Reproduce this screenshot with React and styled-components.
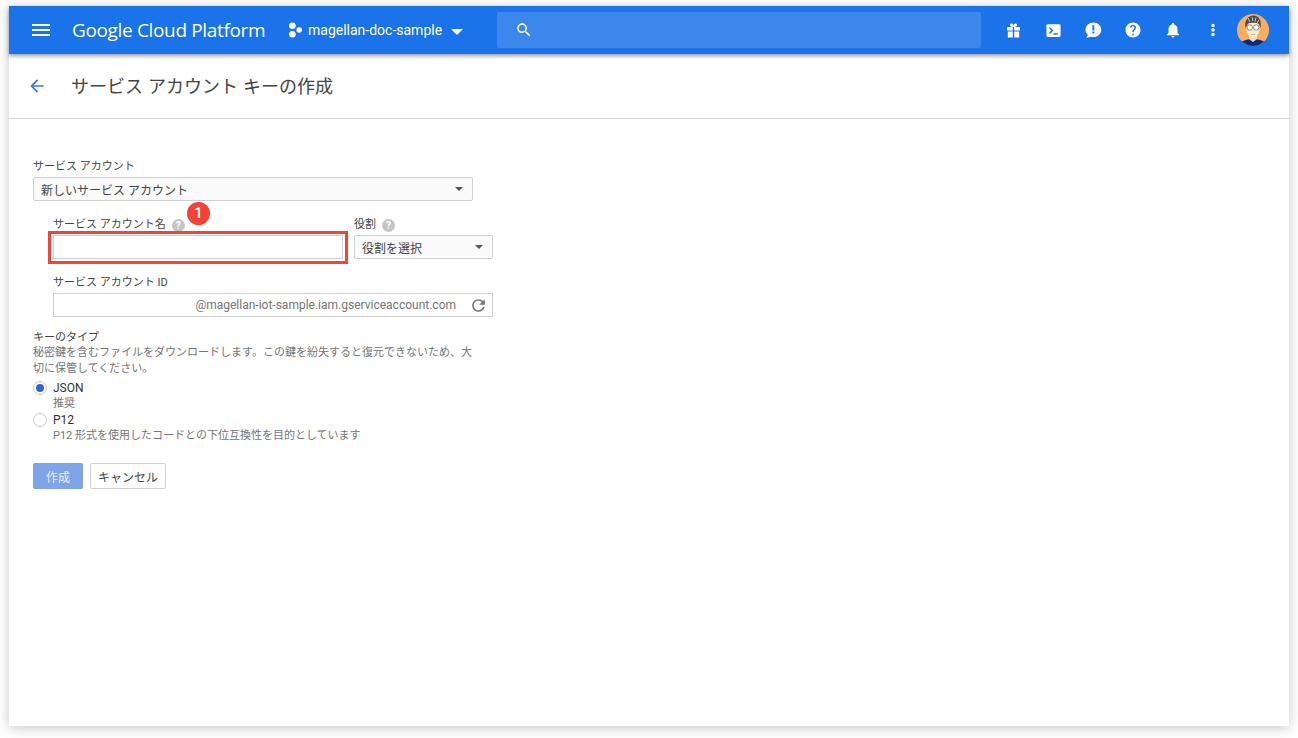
import React from "react";
import styled, { createGlobalStyle } from "styled-components";

const FONT = `Roboto, "Noto Sans CJK JP", sans-serif`;

const Global = createGlobalStyle`
  html, body { margin: 0; padding: 0; background: #fff; }
  body { font-family: ${FONT}; font-size: 12px; color: #333; }
  * { box-sizing: border-box; }
`;

const Page = styled.div`
  padding: 6px 9px 12px;
  height: 738px;
  overflow: hidden;
`;
const Frame = styled.div`
  width: 1280px;
  height: 720px;
  background: #fff;
  box-shadow: 0 2px 12px rgba(0, 0, 0, 0.22);
  display: flex;
  flex-direction: column;
`;
const Header = styled.header`
  height: 48px;
  flex: none;
  background: #1a73e8;
  box-shadow: 0 2px 4px rgba(0, 0, 0, 0.4);
  display: flex;
  align-items: center;
  position: relative;
  color: #fff;
`;
const MenuButton = styled.div`
  width: 24px;
  height: 24px;
  margin-left: 20px;
  display: flex;
`;
const Brand = styled.div`
  margin-left: 19px;
  width: 193px;
  font-family: "Open Sans", Roboto, sans-serif;
  font-size: 19px;
  letter-spacing: -0.35px;
  white-space: nowrap;
`;
const ProjectPicker = styled.div`
  margin-left: 23px;
  width: 209px;
  display: flex;
  align-items: center;
  font-size: 14px;
`;
const ProjectName = styled.span`
  margin-left: 4px;
`;
const Caret = styled.span`
  width: 0;
  height: 0;
  border-left: 6px solid transparent;
  border-right: 6px solid transparent;
  border-top: 6px solid #fff;
  margin-left: 9px;
  margin-top: 3px;
`;
const Search = styled.div`
  width: 484px;
  height: 36px;
  background: #3c87eb;
  display: flex;
  align-items: center;
  padding-left: 18px;
  border-radius: 2px;
`;
const Actions = styled.div`
  margin-left: 12px;
  display: flex;
  align-items: center;
`;
const Action = styled.div`
  width: 40px;
  height: 40px;
  display: flex;
  align-items: center;
  justify-content: center;
`;
const Avatar = styled.div`
  width: 32px;
  height: 32px;
  margin-left: 4px;
  display: flex;
`;
const TitleBar = styled.div`
  height: 65px;
  flex: none;
  border-bottom: 1px solid #d4d4d4;
  display: flex;
  align-items: center;
  padding-left: 18px;
`;
const Title = styled.h1`
  margin: 2px 0 0 24px;
  font-size: 18px;
  font-weight: 400;
  color: #444;
  line-height: 24px;
  word-spacing: 0.5px;
`;
const Form = styled.div`
  padding: 40px 0 0 24px;
  display: flex;
  flex-direction: column;
`;
const Label = styled.label`
  display: flex;
  align-items: center;
  height: 16px;
  font-size: 11px;
  color: #444;
  line-height: 16px;
`;
const Select = styled.div`
  width: ${(p) => p.$width}px;
  height: 24px;
  border: 1px solid #d0d0d0;
  border-radius: 2px;
  background: #fafafa;
  display: flex;
  align-items: center;
  justify-content: space-between;
  padding: 0 9px 0 7px;
  color: #444;
  font-size: 12px;
`;
const SelectCaret = styled.span`
  width: 0;
  height: 0;
  border-left: 4px solid transparent;
  border-right: 4px solid transparent;
  border-top: 4px solid #555;
`;
const Nested = styled.div`
  margin: 16px 0 0 20px;
  width: 440px;
  display: flex;
  flex-direction: column;
`;
const Row = styled.div`
  display: flex;
  justify-content: space-between;
`;
const Field = styled.div`
  display: flex;
  flex-direction: column;
  gap: 2px;
  margin-top: ${(p) => p.$top ?? 0}px;
`;
const Hint = styled.span`
  width: 13px;
  height: 13px;
  margin-left: 6px;
  border-radius: 50%;
  background: #c4c4c4;
  color: #fff;
  font: 700 10px/13px Roboto, sans-serif;
  text-align: center;
`;
const NameInput = styled.div`
  width: 290px;
  height: 24px;
  border: 1px solid #d0d0d0;
  background: #fff;
`;
const Highlight = styled.div`
  position: absolute;
  left: -5px;
  top: -4px;
  width: 300px;
  height: 33px;
  border: 3px solid #f44336;
  pointer-events: none;
`;
const Badge = styled.div`
  position: absolute;
  left: 134px;
  top: -33px;
  width: 23px;
  height: 23px;
  border-radius: 50%;
  background: #f44336;
  color: #fff;
  font: 500 15px/23px Roboto, sans-serif;
  text-align: center;
`;
const InputWrap = styled.div`
  position: relative;
  height: 24px;
`;
const IdBox = styled.div`
  width: 440px;
  height: 24px;
  border: 1px solid #d0d0d0;
  display: flex;
  align-items: center;
  justify-content: flex-end;
  padding-right: 36px;
  color: #757575;
  font-size: 12px;
  position: relative;
`;
const Refresh = styled.span`
  position: absolute;
  right: 4px;
  top: 2px;
  display: flex;
`;
const KeyType = styled.div`
  margin-top: 14px;
  width: 440px;
`;
const KeyLabel = styled.div`
  font-size: 11px;
  line-height: 14px;
  color: #444;
`;
const Desc = styled.div`
  font-size: 11px;
  line-height: 16px;
  color: #757575;
`;
const OptionRow = styled.div`
  display: flex;
  align-items: center;
  height: 16px;
  font-size: 12px;
  color: #333;
  margin-top: ${(p) => p.$top ?? 0}px;
`;
const Radio = styled.span`
  width: 14px;
  height: 14px;
  border-radius: 50%;
  border: 1px solid #c8c8c8;
  background: #fff;
  margin-right: 6px;
  display: flex;
  align-items: center;
  justify-content: center;
  &::after {
    content: "";
    display: ${(p) => (p.$on ? "block" : "none")};
    width: 8px;
    height: 8px;
    border-radius: 50%;
    background: #2a66d9;
  }
`;
const OptionDesc = styled(Desc)`
  margin-left: 20px;
`;
const Buttons = styled.div`
  margin-top: 19px;
  display: flex;
  gap: 7px;
`;
const Primary = styled.button`
  width: 50px;
  height: 26px;
  border: 0;
  border-radius: 2px;
  background: #7fa4e8;
  color: #e8effb;
  font: 12px ${FONT};
  padding: 0;
`;
const Secondary = styled.button`
  width: 76px;
  height: 26px;
  border: 1px solid #d0d0d0;
  border-radius: 2px;
  background: #fff;
  color: #444;
  font: 12px ${FONT};
  padding: 0;
`;

const Icon = ({ d, size = 18, color = "#fff" }) => (
  <svg width={size} height={size} viewBox="0 0 24 24" fill={color}>
    <path d={d} />
  </svg>
);

const PATHS = {
  menu: "M3 18h18v-2H3v2zm0-5h18v-2H3v2zm0-7v2h18V6H3z",
  back: "M20 11H7.83l5.59-5.59L12 4l-8 8 8 8 1.41-1.41L7.83 13H20v-2z",
  search:
    "M15.5 14h-.79l-.28-.27C15.41 12.59 16 11.11 16 9.5 16 5.91 13.09 3 9.5 3S3 5.91 3 9.5 5.91 16 9.5 16c1.61 0 3.09-.59 4.23-1.57l.27.28v.79l5 4.99L20.49 19l-4.99-5zm-6 0C7.01 14 5 11.99 5 9.5S7.01 5 9.5 5 14 7.01 14 9.5 11.99 14 9.5 14z",
  gift:
    "M3 7h6.6C8.3 6.5 7 5.6 7 4.3 7 3 8 2.2 9.1 2.2c1.3 0 2.2 1 2.9 2.6.7-1.6 1.6-2.6 2.9-2.6C16 2.2 17 3 17 4.3c0 1.3-1.3 2.2-2.6 2.7H21v5H13V7h-2v5H3V7zm1 6.5h7V22H4v-8.500zm9 0h7V22h-7v-8.500z",
  terminal:
    "M4 3h16a2 2 0 0 1 2 2v14a2 2 0 0 1-2 2H4a2 2 0 0 1-2-2V5a2 2 0 0 1 2-2zm1.600 5.500L9 12l-3.400 3.500 1.400 1.400L11.800 12 7 7.100 5.600 8.500zM12 16v2h6v-2h-6z",
  feedback:
    "M12.500 2C6.700 2 2 6.300 2 11.600c0 2.700 1.200 5.100 3.200 6.900L3 22.500l6.200-1.600c1 .3 2.100.4 3.300.4C18.300 21.300 23 17 23 11.600S18.300 2 12.500 2zm1.300 14.500h-2.600v-2.500h2.600v2.500zm0-4h-2.600V5.500h2.600v7z",
  help:
    "M12 2C6.480 2 2 6.480 2 12s4.480 10 10 10 10-4.480 10-10S17.520 2 12 2zm1 17h-2v-2h2v2zm2.070-7.750l-.9.920C13.450 12.900 13 13.500 13 15h-2v-.5c0-1.100.450-2.100 1.170-2.830l1.240-1.260c.370-.360.590-.860.590-1.410 0-1.100-.9-2-2-2s-2 .9-2 2H8c0-2.210 1.790-4 4-4s4 1.790 4 4c0 .880-.360 1.680-.930 2.250z",
  bell:
    "M12 22c1.100 0 2-.9 2-2h-4c0 1.100.890 2 2 2zm6-6v-5c0-3.070-1.640-5.640-4.500-6.320V4c0-.830-.670-1.500-1.500-1.500s-1.500.670-1.500 1.500v.680C7.630 5.360 6 7.920 6 11v5l-2 2v1h16v-1l-2-2z",
  more:
    "M12 8.300c1.300 0 2.300-1 2.300-2.300S13.300 3.700 12 3.700 9.700 4.700 9.700 6s1 2.300 2.300 2.300zm0 1.400c-1.300 0-2.300 1-2.300 2.300s1 2.300 2.300 2.300 2.300-1 2.300-2.300-1-2.300-2.300-2.300zm0 6c-1.300 0-2.300 1-2.300 2.300s1 2.300 2.300 2.300 2.300-1 2.300-2.300-1-2.300-2.300-2.300z",
  refresh:
    "M17.650 6.350C16.200 4.900 14.210 4 12 4c-4.420 0-7.990 3.580-7.990 8s3.570 8 7.990 8c3.730 0 6.840-2.550 7.730-6h-2.080c-.820 2.330-3.040 4-5.650 4-3.310 0-6-2.690-6-6s2.690-6 6-6c1.660 0 3.140.690 4.220 1.780L13 11h7V4l-2.350 2.350z",
};

const ProjectDots = () => (
  <svg width="16" height="16" viewBox="0 0 16 16" fill="#fff">
    <circle cx="4.400" cy="3.800" r="3.300" />
    <circle cx="4.400" cy="12.200" r="3.300" />
    <circle cx="11.200" cy="8" r="2.800" />
  </svg>
);

const AvatarArt = () => (
  <svg width="32" height="32" viewBox="0 0 32 32">
    <defs>
      <clipPath id="avatar-clip">
        <circle cx="16" cy="16" r="16" />
      </clipPath>
    </defs>
    <g clipPath="url(#avatar-clip)">
      <rect width="32" height="32" fill="#f9ae5d" />
      <path d="M2 32c1-5 7-7 14-7s13 2 14 7z" fill="#0f2a78" />
      <path d="M12 20h8v5l-4 3-4-3z" fill="#f3dfc0" />
      <ellipse cx="16" cy="15" rx="6.500" ry="8.500" fill="#f8ecd0" />
      <path d="M8.500 14C7 7 11 1.500 16.500 1.500S25 7 23.500 14l-1.500-4c-2-1.500-8-1.500-11-.5z" fill="#4a4a4a" />
      <path d="M11 4l2 4M15 3l1 4M19 3.500l-1 4M22 6l-2 3" stroke="#cfcfcf" strokeWidth="1" />
      <circle cx="12.800" cy="13.500" r="2.700" fill="#fff" stroke="#444" strokeWidth=".6" />
      <circle cx="19.200" cy="13.500" r="2.700" fill="#fff" stroke="#444" strokeWidth=".6" />
      <path d="M14 20.500h4" stroke="#a98" strokeWidth=".7" />
    </g>
  </svg>
);

export default function App() {
  return (
    <>
      <Global />
      <Page>
        <Frame>
          <Header>
            <MenuButton>
              <Icon d={PATHS.menu} size={24} />
            </MenuButton>
            <Brand>Google Cloud Platform</Brand>
            <ProjectPicker>
              <ProjectDots />
              <ProjectName>magellan-doc-sample</ProjectName>
              <Caret />
            </ProjectPicker>
            <Search>
              <Icon d={PATHS.search} size={18} />
            </Search>
            <Actions>
              <Action><Icon d={PATHS.gift} size={17} /></Action>
              <Action><Icon d={PATHS.terminal} size={17} /></Action>
              <Action><Icon d={PATHS.feedback} size={18} /></Action>
              <Action><Icon d={PATHS.help} size={18} /></Action>
              <Action><Icon d={PATHS.bell} size={18} /></Action>
              <Action><Icon d={PATHS.more} size={18} /></Action>
              <Avatar><AvatarArt /></Avatar>
            </Actions>
          </Header>
          <TitleBar>
            <Icon d={PATHS.back} size={20} color="#3b78e7" />
            <Title>サービス アカウント キーの作成</Title>
          </TitleBar>
          <Form>
            <Field>
              <Label>サービス アカウント</Label>
              <Select $width={440}>
                新しいサービス アカウント
                <SelectCaret />
              </Select>
            </Field>
            <Nested>
              <Row>
                <Field>
                  <Label>
                    サービス アカウント名<Hint>?</Hint>
                  </Label>
                  <InputWrap>
                    <NameInput />
                    <Highlight />
                    <Badge>1</Badge>
                  </InputWrap>
                </Field>
                <Field>
                  <Label>
                    役割<Hint>?</Hint>
                  </Label>
                  <Select $width={139}>
                    役割を選択
                    <SelectCaret />
                  </Select>
                </Field>
              </Row>
              <Field $top={16}>
                <Label>サービス アカウント ID</Label>
                <IdBox>
                  @magellan-iot-sample.iam.gserviceaccount.com
                  <Refresh>
                    <Icon d={PATHS.refresh} size={19} color="#757575" />
                  </Refresh>
                </IdBox>
              </Field>
            </Nested>
            <KeyType>
              <KeyLabel>キーのタイプ</KeyLabel>
              <Desc>
                秘密鍵を含むファイルをダウンロードします。この鍵を紛失すると復元できないため、大切に保管してください。
              </Desc>
              <OptionRow $top={3}>
                <Radio $on />
                JSON
              </OptionRow>
              <OptionDesc>推奨</OptionDesc>
              <OptionRow>
                <Radio />
                P12
              </OptionRow>
              <OptionDesc>P12 形式を使用したコードとの下位互換性を目的としています</OptionDesc>
            </KeyType>
            <Buttons>
              <Primary>作成</Primary>
              <Secondary>キャンセル</Secondary>
            </Buttons>
          </Form>
        </Frame>
      </Page>
    </>
  );
}
